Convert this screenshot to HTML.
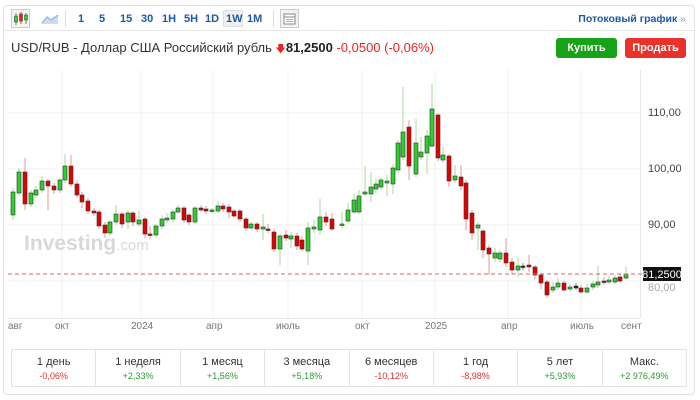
<!DOCTYPE html>
<html><head><meta charset="utf-8"><style>
*{margin:0;padding:0;box-sizing:border-box}
body{width:700px;height:400px;background:#fff;font-family:"Liberation Sans",sans-serif;position:relative;overflow:hidden;color:#333}
.card{position:absolute;left:3px;top:5px;width:692px;height:390px;border:1px solid #e3e3e3;border-radius:4px}
.tb{position:absolute;left:0;top:0;width:100%;height:25px;border-bottom:1px solid #e6e6e6}
.t{position:absolute;top:7px;font-size:11px;font-weight:bold;color:#1a5aa8;white-space:nowrap}
.sep{position:absolute;top:4px;width:1px;height:17px;background:#ddd}
.title{position:absolute;left:11px;top:40px;font-size:13px;color:#333;white-space:nowrap}
.btn{position:absolute;top:38px;width:61px;height:20px;border-radius:3px;color:#fff;font-size:11px;font-weight:bold;text-align:center;line-height:20px}
.tab{position:absolute;left:11px;top:349px;width:676px;height:38px;border:1px solid #e3e3e3;display:flex}
.tab div{flex:1;border-right:1px solid #e3e3e3;text-align:center;font-size:11px;padding-top:6px;color:#333}
.tab div:last-child{border-right:none}
.tab b{display:block;font-size:9px;font-weight:normal;margin-top:3px}
.g{color:#2a9d2a}.r{color:#e53030}
.xl{position:absolute;top:321px;font-size:10px;color:#777}
.yl{position:absolute;left:648px;font-size:11px;color:#444}
</style></head><body>
<div class="card">
 <div class="tb">
  <svg style="position:absolute;left:7px;top:3px" width="19" height="19"><rect x="0.5" y="0.5" width="18" height="18" fill="#f4f4f4" stroke="#ccc"/><line x1="5" y1="4" x2="5" y2="16" stroke="#3a3"/><rect x="3.5" y="7" width="3" height="6" fill="#3c3" stroke="#333" stroke-width=".5"/><line x1="10" y1="3" x2="10" y2="15" stroke="#c33"/><rect x="8.5" y="5" width="3" height="7" fill="#e22" stroke="#333" stroke-width=".5"/><line x1="15" y1="4" x2="15" y2="15" stroke="#3a3"/><rect x="13.5" y="6" width="3" height="5" fill="#3c3" stroke="#333" stroke-width=".5"/></svg>
  <svg style="position:absolute;left:37px;top:6px" width="18" height="13"><path d="M1 11 L6 5 L10 8 L17 3 L17 12 L1 12Z" fill="#c9dcf2"/><path d="M1 11 L6 5 L10 8 L17 3" fill="none" stroke="#8fb3de" stroke-width="1.2"/></svg>
  <div class="sep" style="left:61px"></div>
  <span class="t" style="left:74px">1</span><span class="t" style="left:95px">5</span><span class="t" style="left:116px">15</span><span class="t" style="left:137px">30</span><span class="t" style="left:158px">1H</span><span class="t" style="left:180px">5H</span><span class="t" style="left:201px">1D</span>
  <span style="position:absolute;left:219px;top:4px;width:20px;height:17px;background:#f0f0f0;border:1px solid #ddd;border-radius:2px"></span><span class="t" style="left:222px">1W</span><span class="t" style="left:243px">1M</span>
  <div class="sep" style="left:269px"></div>
  <svg style="position:absolute;left:276px;top:3px" width="19" height="19"><rect x="0.5" y="0.5" width="18" height="18" fill="#f2f2f2" stroke="#ccc"/><rect x="4" y="5" width="11" height="10" fill="#fff" stroke="#888"/><line x1="4" y1="8" x2="15" y2="8" stroke="#888"/><line x1="6" y1="10.5" x2="13" y2="10.5" stroke="#aaa"/><line x1="6" y1="12.5" x2="13" y2="12.5" stroke="#aaa"/></svg>
  <span class="t" style="right:8px;left:auto;font-size:10.5px">Потоковый график <span style="color:#7a9cc8;font-weight:normal">»</span></span>
 </div>
</div>
<div class="title">USD/RUB - Доллар США Российский рубль <span style="color:#e22;font-size:10px">&#x1F847;</span><b style="color:#222">81,2500</b> <span style="color:#e22">-0,0500 (-0,06%)</span></div>
<div class="btn" style="left:556px;background:#17a317">Купить</div>
<div class="btn" style="left:625px;background:#e8332a">Продать</div>
<svg style="position:absolute;left:0;top:0" width="700" height="400" id="ch">
 <g stroke="#f0f0f0" stroke-width="1">
  <line x1="8" y1="113" x2="640" y2="113"/><line x1="8" y1="169" x2="640" y2="169"/><line x1="8" y1="225" x2="640" y2="225"/><line x1="8" y1="281" x2="640" y2="281"/>
  <line x1="62" y1="70" x2="62" y2="318"/><line x1="141" y1="70" x2="141" y2="318"/><line x1="213" y1="70" x2="213" y2="318"/><line x1="288" y1="70" x2="288" y2="318"/><line x1="362" y1="70" x2="362" y2="318"/><line x1="435" y1="70" x2="435" y2="318"/><line x1="508" y1="70" x2="508" y2="318"/><line x1="581" y1="70" x2="581" y2="318"/>
 </g>
 <line x1="640.5" y1="70" x2="640.5" y2="318" stroke="#e6e6e6"/>
 <line x1="8" y1="318.5" x2="640" y2="318.5" stroke="#e6e6e6"/>
 <text x="24" y="250" font-family="Liberation Sans" font-weight="bold" font-size="21" fill="#d8d8d8">Investing<tspan font-weight="normal" font-size="15">.com</tspan></text>
 <g id="cd"></g>
 <line x1="8" y1="274" x2="642" y2="274" stroke="#d66" stroke-dasharray="4,3"/>
 <rect x="643" y="267" width="38" height="14" fill="#111"/>
 <text x="662" y="278" text-anchor="middle" font-family="Liberation Sans" font-size="11" fill="#fff">81,2500</text>
</svg>
<div class="yl" style="top:107px">110,00</div><div class="yl" style="top:163px">100,00</div><div class="yl" style="top:219px">90,00</div><div class="yl" style="top:282px;color:#aaa">80,00</div>
<span class="xl" style="left:8px">авг</span><span class="xl" style="left:55px">окт</span><span class="xl" style="left:131px">2024</span><span class="xl" style="left:206px">апр</span><span class="xl" style="left:276px">июль</span><span class="xl" style="left:355px">окт</span><span class="xl" style="left:425px">2025</span><span class="xl" style="left:501px">апр</span><span class="xl" style="left:570px">июль</span><span class="xl" style="left:621px">сент</span>
<div class="tab">
 <div>1 день<b class="r">-0,06%</b></div><div>1 неделя<b class="g">+2,33%</b></div><div>1 месяц<b class="g">+1,56%</b></div><div>3 месяца<b class="g">+5,18%</b></div><div>6 месяцев<b class="r">-10,12%</b></div><div>1 год<b class="r">-8,98%</b></div><div>5 лет<b class="g">+5,93%</b></div><div>Макс.<b class="g">+2 976,49%</b></div>
</div>
<script>
var D=[[13,192,215,'g',188,220],[19,172,193,'g',168,196],[25,172,204,'r',158,210],[31,193,204,'g',190,207],[36,190,195,'g',186,198],[42,181,190,'g',176,193],[48,181,186,'r',179,210],[54,186,190,'r',183,194],[60,180,190,'g',178,193],[65,166,180,'g',154,183],[71,166,184,'r',155,187],[77,184,195,'r',180,198],[82,195,202,'r',192,208],[88,201,211,'r',198,214],[94,211,213,'r',208,216],[99,212,226,'r',210,229],[105,225,233,'r',222,238],[110,222,233,'g',220,236],[116,214,222,'g',205,225],[122,214,224,'r',212,228],[128,213,222,'g',210,229],[133,213,222,'r',211,226],[139,220,224,'g',211,227],[145,219,234,'r',217,238],[150,234,235,'r',226,239],[156,226,235,'g',224,238],[162,219,226,'g',215,229],[167,218,220,'g',213,223],[173,212,219,'g',209,222],[178,208,212,'g',205,214],[184,208,220,'r',206,223],[189,215,222,'r',213,225],[195,208,222,'g',206,224],[201,208,210,'r',205,212],[206,209,211,'r',206,214],[212,210,211,'g',208,213],[218,206,211,'g',201,213],[223,206,209,'r',203,212],[229,207,212,'r',204,218],[234,211,216,'r',209,218],[240,211,219,'r',209,222],[246,219,228,'r',217,231],[251,224,228,'g',222,230],[257,224,229,'r',222,232],[263,227,229,'g',214,240],[268,229,230,'r',224,233],[274,232,249,'r',229,252],[280,236,249,'g',234,265],[286,235,238,'r',230,241],[291,236,239,'g',232,248],[297,236,246,'r',233,250],[302,240,249,'r',236,251],[308,228,251,'g',222,265],[314,227,229,'g',220,233],[320,217,230,'g',199,235],[326,217,222,'r',212,226],[332,219,229,'r',213,231],[342,224,225,'g',212,228],[348,210,221,'g',203,223],[354,200,212,'g',194,214],[359,196,212,'g',190,214],[365,192,194,'g',166,196],[371,187,194,'g',172,202],[376,184,189,'g',178,193],[381,180,187,'g',178,190],[387,181,183,'g',175,196],[393,168,184,'g',164,194],[398,143,170,'g',140,173],[403,132,157,'g',87,160],[409,127,166,'r',120,180],[416,143,174,'g',119,177],[421,152,157,'g',137,160],[427,136,153,'g',130,174],[432,109,146,'g',84,148],[438,115,158,'r',113,161],[443,155,160,'g',147,163],[449,156,181,'r',154,187],[455,176,180,'g',165,183],[461,177,186,'r',165,190],[466,183,219,'r',180,230],[472,213,233,'r',210,240],[478,225,228,'g',222,250],[483,231,250,'r',229,258],[489,248,254,'r',245,275],[495,253,258,'g',248,262],[500,253,259,'g',250,263],[506,253,263,'r',238,267],[512,262,270,'r',258,274],[518,266,270,'g',258,277],[523,266,267,'k',263,270],[529,265,267,'r',255,272],[535,267,275,'r',265,279],[541,275,283,'r',273,289],[547,282,295,'r',280,298],[553,287,290,'g',282,293],[558,283,287,'g',278,290],[564,283,290,'r',281,292],[570,287,289,'g',284,292],[576,286,288,'k',283,290],[581,288,292,'r',285,294],[587,288,292,'g',284,294],[593,284,287,'g',281,290],[598,282,285,'g',266,288],[604,281,282,'r',277,285],[609,280,282,'g',276,284],[615,278,282,'g',275,284],[620,277,281,'r',274,283],[626,274,278,'g',267,280]];
var s='';D.forEach(function(c){var x=c[0],t=c[1],b=c[2],k=c[3];var wc=k=='g'?'#a9d79f':k=='r'?'#e59a9a':'#888';var f=k=='g'?'#2bd02b':k=='r'?'#e50000':'#222';s+='<line x1="'+x+'" y1="'+c[4]+'" x2="'+x+'" y2="'+c[5]+'" stroke="'+wc+'" stroke-width="1"/>';var h=Math.max(b-t,1.5);s+='<rect x="'+(x-2)+'" y="'+t+'" width="4" height="'+h+'" fill="'+f+'" stroke="#333" stroke-width="0.6"/>';});
document.getElementById('cd').innerHTML=s;
</script>
</body></html>
